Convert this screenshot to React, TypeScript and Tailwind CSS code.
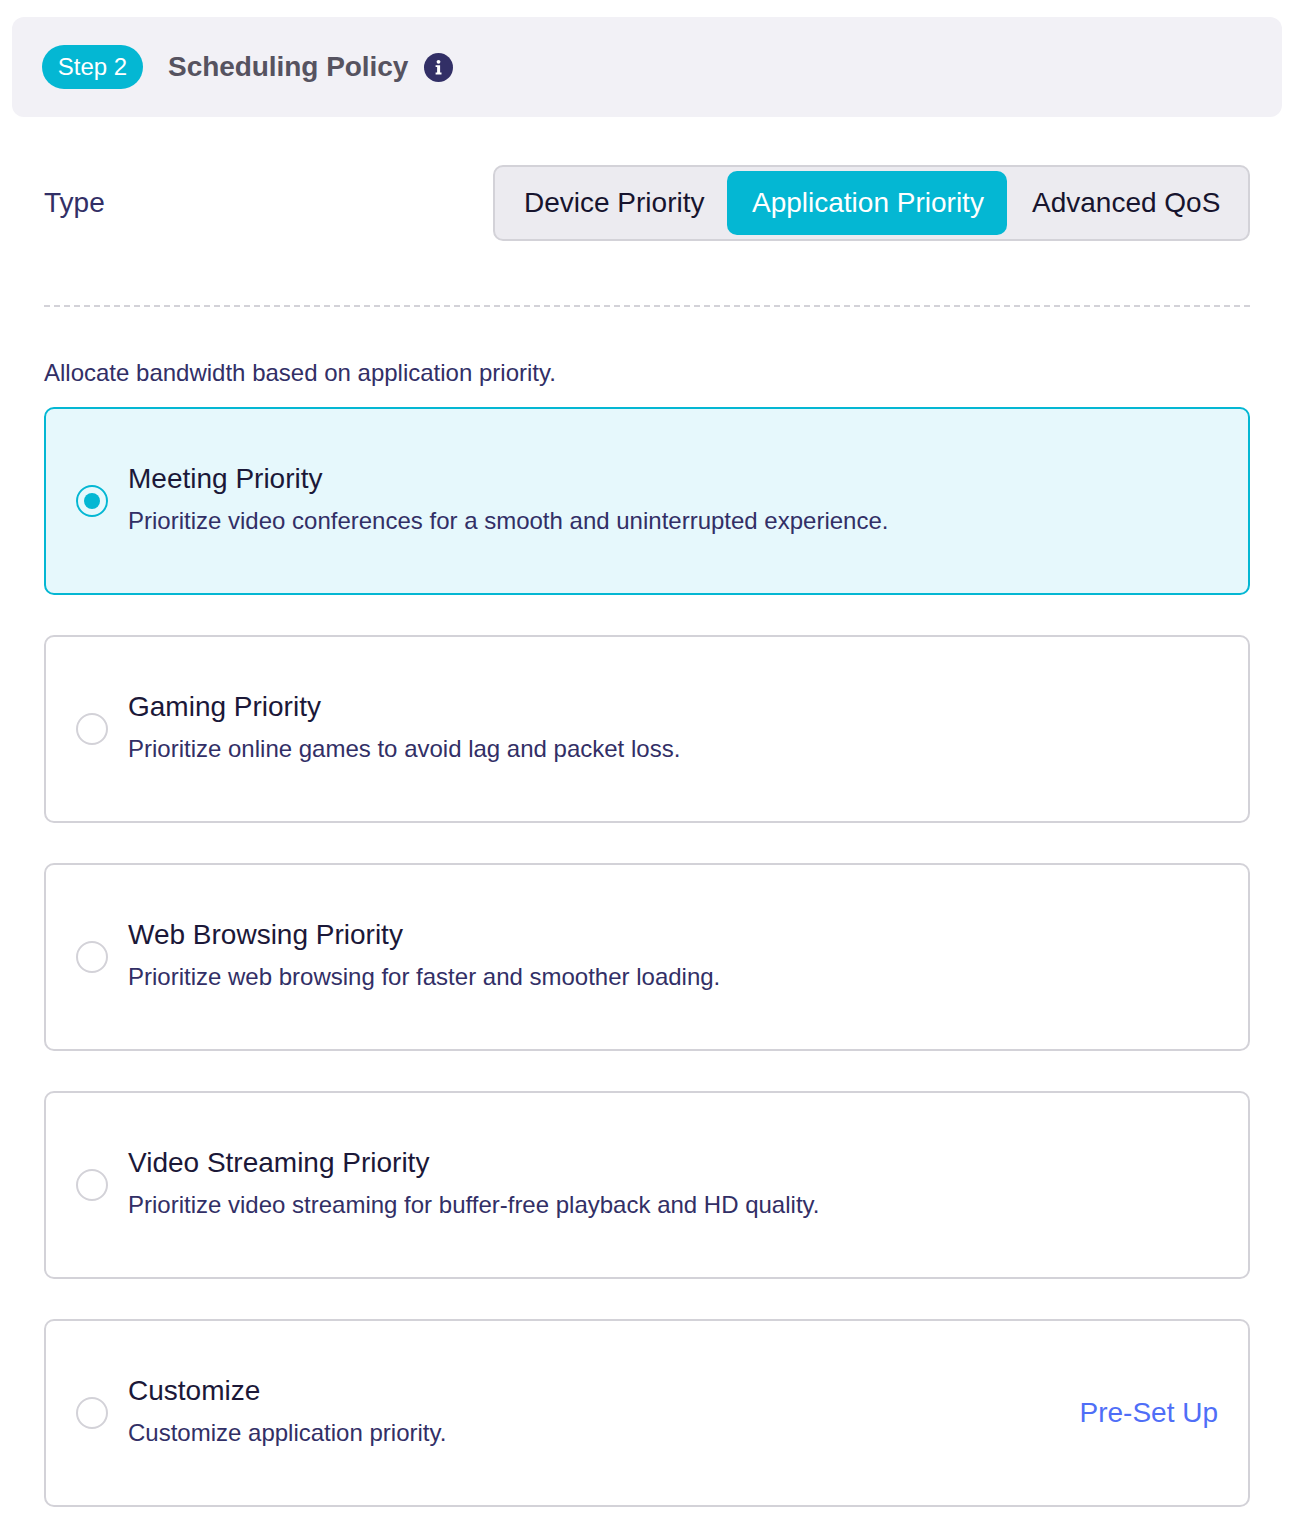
import React from 'react';

const options = [
  { title: 'Meeting Priority', desc: 'Prioritize video conferences for a smooth and uninterrupted experience.', selected: true },
  { title: 'Gaming Priority', desc: 'Prioritize online games to avoid lag and packet loss.' },
  { title: 'Web Browsing Priority', desc: 'Prioritize web browsing for faster and smoother loading.' },
  { title: 'Video Streaming Priority', desc: 'Prioritize video streaming for buffer-free playback and HD quality.' },
  { title: 'Customize', desc: 'Customize application priority.', action: 'Pre-Set Up' },
];

const InfoIcon = () => (
  <svg width="29" height="29" viewBox="0 0 29 29" aria-hidden="true">
    <circle cx="14.5" cy="14.5" r="14.5" fill="#322f66" />
    <circle cx="14.5" cy="8.8" r="1.9" fill="#fff" />
    <path d="M11.6 12.2h4.5v7.4h1.4v1.9h-5.9v-1.9h1.5v-5.5h-1.5z" fill="#fff" />
  </svg>
);

export default function App() {
  return (
    <div className="w-[1294px] h-[1520px] bg-white px-3 pt-[17px] font-['Liberation_Sans',Arial,sans-serif]">
      {/* Step header */}
      <div className="h-[100px] rounded-xl bg-[#f2f1f6] pl-[30px] flex items-center">
        <span className="h-11 w-[101px] rounded-full bg-[#04b7d3] text-white text-2xl flex items-center justify-center">Step 2</span>
        <h2 className="ml-[25px] w-[241px] text-[28px] tracking-[-0.05px] font-bold text-[#565360] whitespace-nowrap">Scheduling Policy</h2>
        <span className="ml-[15px] flex"><InfoIcon /></span>
      </div>

      <div className="px-8">
        {/* Type selector */}
        <div className="mt-12 flex items-center justify-between">
          <span className="text-[28px] text-[#322f66]">Type</span>
          <div className="w-[757px] h-[76px] rounded-[10px] border-2 border-[#d3d2d8] bg-[#ecebf0] p-1 flex items-center text-[28px] text-[#17142e]">
            <span className="w-[228px] pl-[25px] whitespace-nowrap">Device Priority</span>
            <span className="w-[280px] h-16 rounded-[10px] bg-[#04b7d3] text-white pl-[25px] flex items-center whitespace-nowrap">Application Priority</span>
            <span className="pl-[25px] whitespace-nowrap">Advanced QoS</span>
          </div>
        </div>

        <div className="mt-16 border-t-2 border-dashed border-[#d3d2d8]" />

        <p className="mt-[51px] text-2xl leading-[30px] text-[#322f66]">Allocate bandwidth based on application priority.</p>

        {/* Policy options */}
        <div className="mt-[19px] flex flex-col gap-10">
          {options.map((o) => (
            <div
              key={o.title}
              className={o.selected
                ? 'h-[188px] rounded-[10px] border-2 border-[#04b7d3] bg-[#e6f8fc] pl-[30px] pr-[30px] flex items-center'
                : 'h-[188px] rounded-[10px] border-2 border-[#d3d2d8] bg-white pl-[30px] pr-[30px] flex items-center'}
            >
              {o.selected ? (
                <span className="w-8 h-8 shrink-0 rounded-full border-2 border-[#04b7d3] flex items-center justify-center">
                  <span className="w-4 h-4 rounded-full bg-[#04b7d3]" />
                </span>
              ) : (
                <span className="w-8 h-8 shrink-0 rounded-full border-2 border-[#d3d2d8] bg-white" />
              )}
              <div className="ml-5 flex-1 -mt-[1px]">
                <div className="text-[28px] leading-[40px] text-[#1b1838]">{o.title}</div>
                <div className="mt-[1px] mb-[1px] text-2xl leading-[42px] h-[42px] text-[#322f66]">{o.desc}</div>
              </div>
              {o.action && <span className="text-[28px] text-[#4f6ef7]">{o.action}</span>}
            </div>
          ))}
        </div>
      </div>
    </div>
  );
}
